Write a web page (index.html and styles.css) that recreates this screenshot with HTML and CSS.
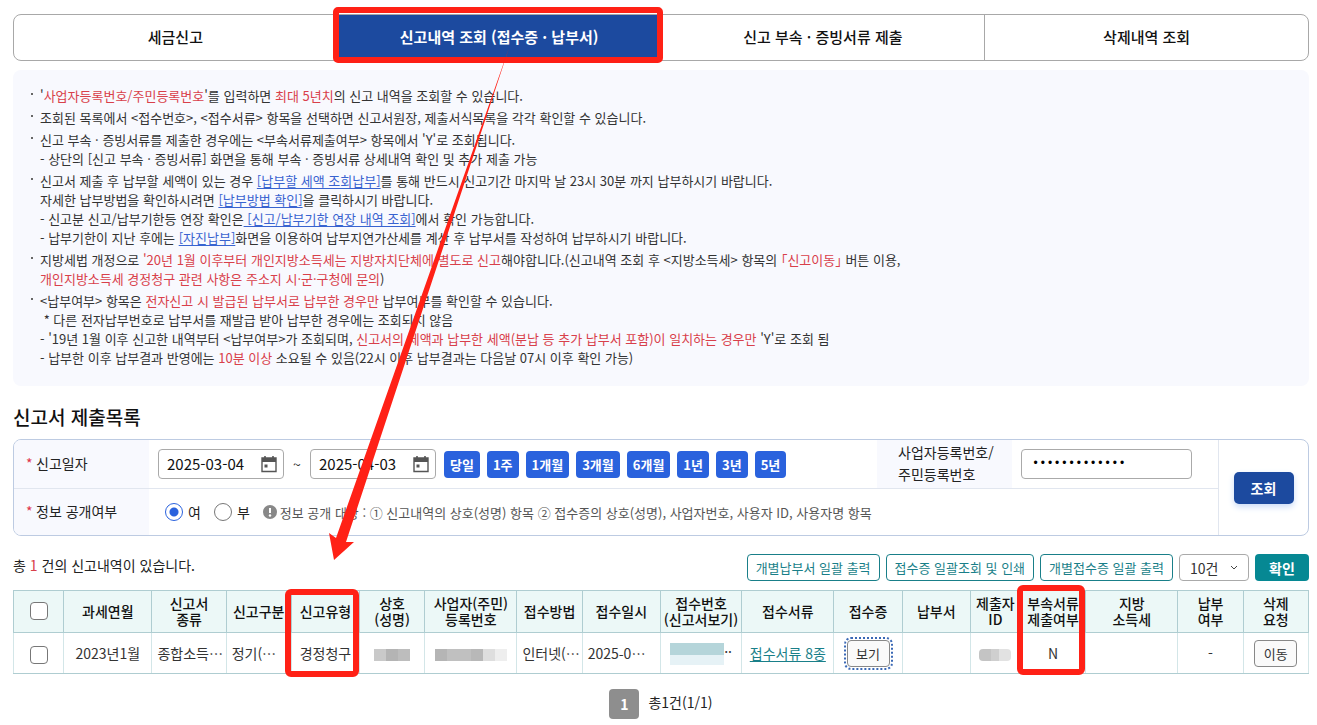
FILE: index.html
```html
<!DOCTYPE html>
<html lang="ko">
<head>
    <meta charset="UTF-8">
    <meta name="viewport" content="width=device-width, initial-scale=1.0">
    <title>신고내역 조회</title>
    <link rel="stylesheet" href="styles.css">
</head>
<body>
    <nav class="tabs">
        <a class="tab" href="#">세금신고</a>
        <a class="tab active" href="#">신고내역 조회 (접수증 · 납부서)</a>
        <a class="tab" href="#">신고 부속 · 증빙서류 제출</a>
        <a class="tab" href="#">삭제내역 조회</a>
    </nav>

    <ul class="notice">
        <li>'<em>사업자등록번호/주민등록번호</em>'를 입력하면 <em>최대 5년치</em>의 신고 내역을 조회할 수 있습니다.</li>
        <li>조회된 목록에서 &lt;접수번호&gt;, &lt;접수서류&gt; 항목을 선택하면 신고서원장, 제출서식목록을 각각 확인할 수 있습니다.</li>
        <li>신고 부속 · 증빙서류를 제출한 경우에는 &lt;부속서류제출여부&gt; 항목에서 'Y'로 조회됩니다.<br>
            - 상단의 [신고 부속 · 증빙서류] 화면을 통해 부속 · 증빙서류 상세내역 확인 및 추가 제출 가능</li>
        <li>신고서 제출 후 납부할 세액이 있는 경우 <a href="#">[납부할 세액 조회납부]</a>를 통해 반드시 신고기간 마지막 날 23시 30분 까지 납부하시기 바랍니다.<br>
            자세한 납부방법을 확인하시려면 <a href="#">[납부방법 확인]</a>을 클릭하시기 바랍니다.<br>
            - 신고분 신고/납부기한등 연장 확인은<a href="#"> [신고/납부기한 연장 내역 조회]</a>에서 확인 가능합니다.<br>
            - 납부기한이 지난 후에는 <a href="#">[자진납부]</a>화면을 이용하여 납부지연가산세를 계산 후 납부서를 작성하여 납부하시기 바랍니다.</li>
        <li>지방세법 개정으로 <em>'20년 1월 이후부터 개인지방소득세는 지방자치단체에 별도로 신고</em>해야합니다.(신고내역 조회 후 &lt;지방소득세&gt; 항목의 <em>｢신고이동｣</em> 버튼 이용,<br>
            <em>개인지방소득세 경정청구 관련 사항은 주소지 시·군·구청에 문의</em>)</li>
        <li>&lt;납부여부&gt; 항목은 <em>전자신고 시 발급된 납부서로 납부한 경우만</em> 납부여부를 확인할 수 있습니다.<br>
            &nbsp;* 다른 전자납부번호로 납부서를 재발급 받아 납부한 경우에는 조회되지 않음<br>
            - '19년 1월 이후 신고한 내역부터 &lt;납부여부&gt;가 조회되며, <em>신고서의 세액과 납부한 세액(분납 등 추가 납부서 포함)이 일치하는 경우만</em> 'Y'로 조회 됨<br>
            - 납부한 이후 납부결과 반영에는 <em>10분 이상</em> 소요될 수 있음(22시 이후 납부결과는 다음날 07시 이후 확인 가능)</li>
    </ul>

    <h2>신고서 제출목록</h2>

    <form class="search">
        <div class="fields">
            <div class="row">
                <label class="label required" for="dateFrom">신고일자</label>
                <div class="value">
                    <span class="date">
                        <input type="text" id="dateFrom" value="2025-03-04">
                        <svg viewBox="0 0 16 18"><path d="M1 3h14v13.500H1z" fill="none" stroke="#555" stroke-width="1.400"/><path d="M1 3h14v4H1z" fill="#555"/><path d="M4 1v3M12 1v3" stroke="#555" stroke-width="1.600"/><path d="M3.500 9.500h3v3h-3z" fill="#555"/></svg>
                    </span>
                    <span class="tilde">~</span>
                    <span class="date">
                        <input type="text" id="dateTo" aria-label="종료일" value="2025-04-03">
                        <svg viewBox="0 0 16 18"><path d="M1 3h14v13.500H1z" fill="none" stroke="#555" stroke-width="1.400"/><path d="M1 3h14v4H1z" fill="#555"/><path d="M4 1v3M12 1v3" stroke="#555" stroke-width="1.600"/><path d="M3.500 9.500h3v3h-3z" fill="#555"/></svg>
                    </span>
                    <div class="periods">
                        <button type="button">당일</button>
                        <button type="button">1주</button>
                        <button type="button">1개월</button>
                        <button type="button">3개월</button>
                        <button type="button">6개월</button>
                        <button type="button">1년</button>
                        <button type="button">3년</button>
                        <button type="button">5년</button>
                    </div>
                </div>
                <label class="label number" for="regNo">사업자등록번호/<br>주민등록번호</label>
                <div class="value reg">
                    <input type="password" id="regNo" value="0000000000000">
                </div>
            </div>
            <div class="row">
                <span class="label required">정보 공개여부</span>
                <div class="value open">
                    <label><input type="radio" name="open" checked>여</label>
                    <label><input type="radio" name="open">부</label>
                    <span class="hint">
                        <svg viewBox="0 0 14 14"><circle cx="7" cy="7" r="7" fill="#888"/><path d="M7 3v5" stroke="#fff" stroke-width="2"/><circle cx="7" cy="10.500" r="1.200" fill="#fff"/></svg>
                        정보 공개 대상 : ① 신고내역의 상호(성명) 항목 ② 접수증의 상호(성명), 사업자번호, 사용자 ID, 사용자명 항목
                    </span>
                </div>
            </div>
        </div>
        <div class="submit">
            <button type="button">조회</button>
        </div>
    </form>

    <div class="toolbar">
        <p>총 <em>1</em> 건의 신고내역이 있습니다.</p>
        <button class="outline">개별납부서 일괄 출력</button>
        <button class="outline">접수증 일괄조회 및 인쇄</button>
        <button class="outline">개별접수증 일괄 출력</button>
        <select aria-label="목록 개수">
            <option>10건</option>
        </select>
        <button class="confirm">확인</button>
    </div>

    <table>
        <colgroup>
            <col class="w-check"><col class="w-month"><col class="w-kind"><col class="w-s"><col class="w-m"><col class="w-s"><col class="w-l"><col class="w-s"><col class="w-date"><col class="w-receipt"><col class="w-l"><col class="w-m"><col class="w-m"><col class="w-check"><col class="w-s"><col class="w-l"><col class="w-s"><col class="w-s">
        </colgroup>
        <thead>
            <tr>
                <th><input type="checkbox" aria-label="전체 선택"></th>
                <th>과세연월</th>
                <th>신고서<br>종류</th>
                <th>신고구분</th>
                <th>신고유형</th>
                <th>상호<br>(성명)</th>
                <th>사업자(주민)<br>등록번호</th>
                <th>접수방법</th>
                <th>접수일시</th>
                <th>접수번호<br>(신고서보기)</th>
                <th>접수서류</th>
                <th>접수증</th>
                <th>납부서</th>
                <th>제출자<br>ID</th>
                <th>부속서류<br>제출여부</th>
                <th>지방<br>소득세</th>
                <th>납부<br>여부</th>
                <th>삭제<br>요청</th>
            </tr>
        </thead>
        <tbody>
            <tr>
                <td><input type="checkbox" aria-label="선택"></td>
                <td>2023년1월</td>
                <td class="left">종합소득⋯</td>
                <td class="left">정기(⋯</td>
                <td>경정청구</td>
                <td><span class="mask name"></span></td>
                <td><span class="mask reg-no"></span></td>
                <td class="left">인터넷(⋯</td>
                <td class="left">2025-0⋯</td>
                <td><span class="mask receipt"></span>··</td>
                <td><a href="#">접수서류 8종</a></td>
                <td><button class="small focus">보기</button></td>
                <td></td>
                <td><span class="mask user"></span></td>
                <td>N</td>
                <td></td>
                <td>-</td>
                <td><button class="small">이동</button></td>
            </tr>
        </tbody>
    </table>

    <div class="pager">
        <button>1</button>
        <span>총1건(1/1)</span>
    </div>

    <!-- red marks: tab -> report type, attachment column -->
    <svg class="marks" width="1317" height="725" viewBox="0 0 1317 725">
        <g fill="none" stroke="#ff2116" stroke-width="6">
            <rect x="336" y="10" width="324" height="50" rx="2"/>
            <rect x="288" y="592" width="68" height="82" rx="3"/>
            <rect x="1020" y="588" width="62" height="84" rx="3"/>
        </g>
        <path d="M509 48 L336 538 L329 533 L334 560 L354 542 L346 542 Z" fill="#ff2116"/>
    </svg>
</body>
</html>
```

FILE: styles.css
```css
* {
    box-sizing: border-box;
}
body {
    margin: 0;
    padding: 14px 8px 6px 13px;
    font-family: "Noto Sans CJK KR", "Noto Sans", sans-serif;
    font-size: 14px;
    color: #222;
    background-color: #fff;
    position: relative;
}
button, input, select {
    font-family: inherit;
    font-size: 14px;
    margin: 0;
}
button {
    padding: 0;
    border: none;
    border-radius: 4px;
    cursor: pointer;
}
em {
    font-style: normal;
    color: #d8404a;
}

/* tabs */
.tabs {
    display: flex;
    height: 47px;
    border: 1px solid #a8a8a8;
    border-radius: 8px;
    overflow: hidden;
}
.tab {
    flex: 1;
    display: flex;
    align-items: center;
    justify-content: center;
    padding-bottom: 2px;
    font-size: 15px;
    font-weight: 500;
    color: #111;
    text-decoration: none;
    border-left: 1px solid #a8a8a8;
}
.tab:first-child {
    border-left: none;
}
.tab.active {
    background-color: #1c4a9f;
    color: #fff;
    font-weight: bold;
}

/* notice */
.notice {
    list-style: none;
    margin: 9px 0 0;
    padding: 16px 18px;
    background-color: #f8f9fe;
    border-radius: 8px;
    font-size: 13px;
    line-height: 19px;
    color: #333;
}
.notice li {
    position: relative;
    padding-left: 9px;
    margin-bottom: 3px;
}
.notice li::before {
    content: "";
    position: absolute;
    left: 0;
    top: 7px;
    width: 2px;
    height: 2px;
    background-color: #666;
}
.notice a {
    color: #3863d0;
    text-underline-offset: 2px;
}

h2 {
    margin: 17px 0 8px;
    font-size: 19px;
    line-height: 28px;
    font-weight: 500;
    color: #111;
}

/* search box */
.search {
    display: flex;
    border: 1px solid #bdcbe2;
    border-radius: 8px;
    overflow: hidden;
}
.fields {
    flex: 1;
}
.row {
    display: flex;
    height: 46px;
}
.row:first-child {
    height: 49px;
    border-bottom: 1px solid #e1e6ef;
}
.label {
    display: flex;
    align-items: center;
    width: 135px;
    padding-left: 12px;
    padding-bottom: 2px;
    background-color: #f8f9fe;
}
.required::before {
    content: "*";
    width: 10px;
    color: #e0344a;
}
.label.number {
    padding-left: 21px;
    line-height: 22px;
}
.value {
    flex: 1;
    display: flex;
    align-items: center;
    padding-left: 9px;
}
.value.reg {
    flex: none;
    width: 206px;
}
.date {
    display: flex;
    align-items: center;
    width: 126px;
    height: 30px;
    padding: 0 6px 0 8px;
    border: 1px solid #aaa;
    border-radius: 4px;
}
.date input {
    flex: 1;
    min-width: 0;
    padding: 0 0 2px;
    border: none;
    font-size: 15px;
    color: #111;
    outline: none;
}
.date svg {
    width: 16px;
    height: 18px;
}
.tilde {
    width: 26px;
    text-align: center;
}
.periods {
    display: flex;
    gap: 7px;
    margin-left: 8px;
}
.periods button {
    height: 27px;
    padding: 0 6px;
    background-color: #2a62dd;
    color: #fff;
    font-size: 13px;
    font-weight: bold;
}
.reg input {
    width: 171px;
    height: 30px;
    padding: 0 10px;
    border: 1px solid #aaa;
    border-radius: 4px;
    font-family: "Liberation Mono", monospace;
    font-size: 12px;
}
.open {
    padding-left: 16px;
}
.open label {
    display: flex;
    align-items: center;
    gap: 5px;
    margin-right: 13px;
}
.open input {
    appearance: none;
    width: 18px;
    height: 18px;
    border: 1px solid #777;
    border-radius: 50%;
}
.open input:checked {
    border-color: #2a62dd;
    background: radial-gradient(circle, #2a62dd 4px, #fff 5px);
}
.hint {
    display: flex;
    align-items: center;
    gap: 3px;
    font-size: 13px;
    color: #555;
}
.hint svg {
    width: 14px;
    height: 14px;
}
.submit {
    display: flex;
    align-items: center;
    justify-content: center;
    width: 90px;
    border-left: 1px solid #e1e6ef;
}
.submit button {
    width: 60px;
    height: 32px;
    border-radius: 5px;
    background-color: #1c4a9f;
    color: #fff;
    font-weight: bold;
    box-shadow: 0 3px 6px #cbdcf8;
}

/* toolbar */
.toolbar {
    display: flex;
    align-items: center;
    gap: 6px;
    height: 27px;
    margin: 18px 0 9px;
}
.toolbar p {
    flex: 1;
    margin: 0;
    padding-bottom: 6px;
}
.toolbar button {
    height: 27px;
}
.outline {
    padding: 0 8px;
    border: 1px solid #197f89;
    background-color: #fff;
    color: #197f89;
    font-size: 13px;
}
.toolbar select {
    appearance: none;
    width: 70px;
    height: 27px;
    padding: 0 10px;
    border: 1px solid #aaa;
    border-radius: 4px;
    color: #333;
    background: #fff url("data:image/svg+xml,%3Csvg xmlns='http://www.w3.org/2000/svg' width='8' height='6'%3E%3Cpath d='M1 1l3 3 3-3' fill='none' stroke='%23444'/%3E%3C/svg%3E") no-repeat right 10px center;
}
.confirm {
    width: 54px;
    background-color: #068893;
    color: #fff;
    font-weight: bold;
}

/* list */
table {
    width: 100%;
    table-layout: fixed;
    border-collapse: collapse;
    border: 1px solid #afcdd1;
}
.w-check { width: 50px; }
.w-month { width: 88px; }
.w-kind { width: 74px; }
.w-s { width: 65px; }
.w-m { width: 68px; }
.w-l { width: 92px; }
.w-date { width: 78px; }
.w-receipt { width: 81px; }
th, td {
    padding: 0;
    border: 1px solid #afcdd1;
    text-align: center;
    white-space: nowrap;
}
th {
    height: 42px;
    padding-bottom: 2px;
    background-color: #ecf8f7;
    font-weight: 500;
    line-height: 16px;
    color: #111;
}
td {
    height: 41px;
    border-left-color: #d3e6e8;
    border-right-color: #d3e6e8;
    color: #333;
}
td.left {
    padding-left: 5px;
    text-align: left;
}
td a {
    color: #197f89;
    text-underline-offset: 2px;
}
input[type="checkbox"] {
    appearance: none;
    display: inline-block;
    width: 18px;
    height: 18px;
    border: 1px solid #777;
    border-radius: 4px;
    background-color: #fff;
    vertical-align: middle;
}
.small {
    width: 43px;
    height: 27px;
    border: 1px solid #888;
    background-color: #fafafa;
    color: #333;
    font-size: 13px;
}
.small.focus {
    outline: 2px dotted #3a68b5;
    outline-offset: 1px;
}
.mask {
    display: inline-block;
    height: 12px;
    vertical-align: middle;
}
.mask.name {
    width: 36px;
    background: linear-gradient(90deg, #c9c9c9 0 12px, #b4b4b4 12px 24px, #bdbdbd 24px);
}
.mask.reg-no {
    width: 72px;
    background: linear-gradient(90deg, #b5b5b5 0 12px, #c0c0c0 12px 36px, #b8b8b8 36px 48px, #dedede 48px 60px, #eee 60px);
}
.mask.receipt {
    width: 54px;
    height: 22px;
    background: linear-gradient(#b5d5da 0 12px, #e6f2f6 12px);
}
.mask.user {
    width: 32px;
    border-radius: 4px;
    background: linear-gradient(90deg, #c4c4c4 0 12px, #cfcfcf 12px 20px, #e2e2e2 20px);
}

.pager {
    display: flex;
    align-items: center;
    justify-content: center;
    gap: 9px;
    margin-top: 15px;
}
.pager button {
    width: 30px;
    height: 30px;
    background-color: #8e8e8e;
    color: #fff;
    font-weight: bold;
}
.pager span {
    padding-bottom: 4px;
}

.marks {
    position: absolute;
    left: 0;
    top: 0;
    pointer-events: none;
}
```
